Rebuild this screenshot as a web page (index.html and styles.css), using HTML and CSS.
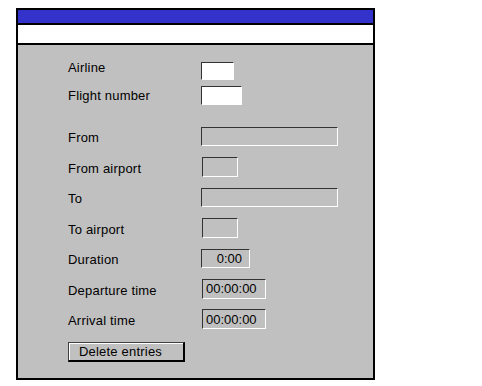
FILE: index.html
```html
<!DOCTYPE html>
<html lang="en">
  <head>
    <meta charset="UTF-8" />
    <meta name="viewport" content="width=device-width, initial-scale=1.0" />
    <title>Flight entry</title>
    <link rel="stylesheet" href="styles.css">
  </head>
  <body>
    <div class="frame">
      <div class="titlebar"></div>
      <div class="menubar"></div>
      <div class="form">
        <div class="group top">
          <div class="row">
            <label class="raised">Airline</label>
            <input class="field white airline" type="text" />
          </div>
          <div class="row">
            <label>Flight number</label>
            <input class="field white flight" type="text" />
          </div>
        </div>
        <div class="group main">
          <div class="row">
            <label>From</label>
            <input class="field wide" type="text" readonly />
          </div>
          <div class="row">
            <label>From airport</label>
            <input class="field code" type="text" readonly />
          </div>
          <div class="row">
            <label>To</label>
            <input class="field wide" type="text" readonly />
          </div>
          <div class="row">
            <label>To airport</label>
            <input class="field code" type="text" readonly />
          </div>
          <div class="row">
            <label>Duration</label>
            <input class="field duration" type="text" value="0:00" readonly />
          </div>
          <div class="row">
            <label>Departure time</label>
            <input class="field time" type="text" value="00:00:00" readonly />
          </div>
          <div class="row">
            <label>Arrival time</label>
            <input class="field time" type="text" value="00:00:00" readonly />
          </div>
        </div>
        <button class="delete" onclick="clearEntries()">Delete entries</button>
      </div>
    </div>
    <script>
      function clearEntries() {
        document.querySelectorAll(".field.white").forEach(function (f) {
          f.value = "";
        });
      }
    </script>
  </body>
</html>
```

FILE: styles.css
```css
body {
  font-family: "Liberation Sans", Arial, sans-serif;
  font-size: 13px;
  margin: 8px;
  background: #fff;
}
.frame {
  width: 355px;
  margin-left: 8px;
  border: 2px solid #000;
  background: #c0c0c0;
}
.titlebar {
  height: 13px;
  background: #3333cc;
  border-bottom: 2px solid #000;
}
.menubar {
  height: 18px;
  background: #fff;
  border-bottom: 2px solid #000;
}
.form {
  padding: 16px 0 16px 50px;
  height: 301px;
}
.group {
  display: grid;
  grid-auto-rows: 20px;
}
.group.top {
  row-gap: 4px;
}
.group.main {
  margin-top: 21px;
  row-gap: 10.5px;
}
.row {
  display: flex;
  align-items: center;
}
.row label {
  width: 133px;
  color: #000;
  letter-spacing: 0.2px;
}
.group.main label {
  padding-top: 3px;
}
.row label.raised {
  padding-bottom: 7px;
}
.field {
  box-sizing: border-box;
  height: 20px;
  margin: 0;
  padding: 0 0 0 3px;
  font-family: inherit;
  font-size: 13px;
  color: #000;
  background: #c0c0c0;
  border: 1px solid #fff;
  border-top-color: #333;
  border-left-color: #333;
  outline: none;
}
.field.white {
  background: #fff;
}
.airline {
  width: 33px;
  height: 18px;
}
.flight {
  width: 41px;
  height: 19px;
}
.wide {
  width: 137px;
  height: 19px;
}
.code {
  width: 36px;
  margin-left: 1px;
}
.duration {
  width: 49px;
  height: 19px;
  text-align: right;
  padding-right: 7px;
}
.time {
  width: 64px;
  margin-left: 1px;
}
.delete {
  display: block;
  box-sizing: border-box;
  width: 117px;
  height: 20px;
  margin-top: 13px;
  padding: 0 0 0 10px;
  text-align: left;
  font-family: inherit;
  font-size: 13px;
  letter-spacing: 0.2px;
  color: #000;
  background: #c0c0c0;
  border: 1px solid #404040;
  border-right: 2px solid #000;
  border-bottom: 2px solid #000;
  box-shadow: inset 1px 1px #fff;
  cursor: pointer;
}
```
